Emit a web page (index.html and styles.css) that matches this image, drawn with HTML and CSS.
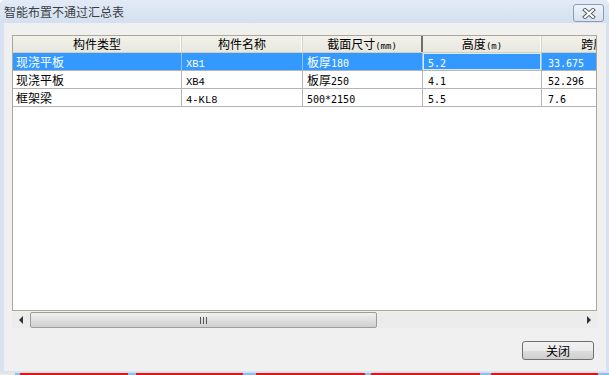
FILE: index.html
```html
<!DOCTYPE html>
<html>
<head>
<meta charset="utf-8">
<link rel="stylesheet" href="styles.css">
</head>
<body>
<div class="screen">
  <div class="window">
    <div class="titlebar">
      <span class="title">智能布置不通过汇总表</span>
      <div class="close">
        <svg width="14" height="11" viewBox="0 0 14 11">
          <path d="M3 2 L11 9 M11 2 L3 9" stroke="#5a6470" stroke-width="4" stroke-linecap="square"/>
          <path d="M3 2 L11 9 M11 2 L3 9" stroke="#ffffff" stroke-width="2" stroke-linecap="square"/>
        </svg>
      </div>
    </div>
    <div class="client">
      <div class="list">
        <div class="row header">
          <div class="cell c1">构件类型</div>
          <div class="cell c2">构件名称</div>
          <div class="cell c3 hot">截面尺寸<span class="sm">(mm)</span></div>
          <div class="cell c4">高度<span class="sm">(m)</span></div>
          <div class="cell c5">跨度<span class="sm">(m)</span></div>
        </div>
        <div class="row sel">
          <div class="cell c1">现浇平板</div>
          <div class="cell c2"><span class="ser">XB1</span></div>
          <div class="cell c3">板厚<span class="num">180</span></div>
          <div class="cell c4 focus"><span class="num">5.2</span></div>
          <div class="cell c5"><span class="num">33.675</span></div>
        </div>
        <div class="row">
          <div class="cell c1">现浇平板</div>
          <div class="cell c2"><span class="ser">XB4</span></div>
          <div class="cell c3">板厚<span class="num">250</span></div>
          <div class="cell c4"><span class="num">4.1</span></div>
          <div class="cell c5"><span class="num">52.296</span></div>
        </div>
        <div class="row">
          <div class="cell c1">框架梁</div>
          <div class="cell c2"><span class="ser">4-KL8</span></div>
          <div class="cell c3"><span class="num">500*2150</span></div>
          <div class="cell c4"><span class="num">5.5</span></div>
          <div class="cell c5"><span class="num">7.6</span></div>
        </div>
      </div>
      <div class="hscroll">
        <div class="arrow left"><span class="tri-l"></span></div>
        <div class="thumb"><span class="grip"></span></div>
        <div class="track"></div>
        <div class="arrow right"><span class="tri-r"></span></div>
      </div>
      <div class="footer">
        <div class="btn">关闭</div>
      </div>
    </div>
  </div>
  <div class="strip"></div>
</div>
</body>
</html>
```
FILE: styles.css
```css
* { box-sizing: border-box; }
html, body { margin: 0; padding: 0; }
body {
  width: 609px;
  height: 375px;
  overflow: hidden;
  font-family: "Noto Sans CJK SC", "Liberation Sans", sans-serif;
  font-size: 12px;
  color: #000;
  background: #fff;
}
.screen { width: 609px; height: 375px; display: flex; flex-direction: column; }
.window {
  width: 609px;
  height: 373px;
  background: #d7e3f1;
  display: flex;
  flex-direction: column;
  border-radius: 5px 5px 0 0;
}
.titlebar {
  height: 23px;
  display: flex;
  align-items: flex-start;
  background: linear-gradient(#e2ebf6, #d4e0ef);
  border-radius: 5px 5px 0 0;
}
.title {
  padding-left: 4px;
  line-height: 23px;
  color: #3a3f47;
  font-size: 12px;
  flex: 1;
}
.close {
  width: 31px;
  height: 18px;
  margin-top: 4px;
  margin-right: 5px;
  border: 1px solid #8d9db3;
  border-radius: 3px;
  background: linear-gradient(#eef3f9, #d9e3ef);
  display: flex;
  align-items: center;
  justify-content: center;
}
.client {
  height: 348px;
  margin: 0 3px 0 4px;
  background: #f0f0f0;
  padding: 12px 9px 0 8px;
  display: flex;
  flex-direction: column;
}
.list {
  height: 276px;
  width: 585px;
  border: 1px solid #aca899;
  background: #fff;
  overflow: hidden;
  flex: none;
}
.row {
  display: flex;
  height: 18px;
  border-bottom: 1px solid #b4b4b4;
  width: 649px;
}
.row.header {
  height: 17px;
  border-bottom: 1px solid #d2cfc0;
  background: linear-gradient(#f2f1ea, #e9e8df);
}
.cell {
  flex: none;
  height: 100%;
  border-right: 1px solid #b4b4b4;
  padding-left: 4px;
  line-height: 17px;
  white-space: nowrap;
  overflow: hidden;
}
.header .cell {
  text-align: center;
  padding-left: 0;
  line-height: 16px;
  border-right: 1px solid #d6d3c8;
  box-shadow: inset -1px 0 0 #fff;
}
.header .cell.hot {
  border-right: 2px solid #6f6f6f;
  box-shadow: none;
}
.c1 { width: 169px; padding-left: 3px; }
.c2 { width: 121px; }
.c3 { width: 120px; }
.c4 { width: 119px; padding-left: 5px; }
.c5 { width: 120px; padding-left: 6px; }
.sm { font-family: "DejaVu Sans Mono", monospace; font-size: 9px; }
.num { font-family: "DejaVu Sans Mono", monospace; font-size: 10px; }
.ser { font-family: "Liberation Mono", monospace; font-size: 10.5px; }
.row.sel { background: #3399ff; color: #fff; }
.row.sel .cell { border-right-color: #8fc3f7; }
.row.sel .cell.focus { box-shadow: inset 0 0 0 1px #dbe9f8; }
.hscroll {
  margin-top: 1px;
  height: 16px;
  width: 585px;
  display: flex;
  background: #ececec;
  flex: none;
}
.arrow {
  width: 18px;
  flex: none;
  display: flex;
  align-items: center;
  justify-content: center;
}
.arrow.right { width: 16px; }
.tri-l {
  width: 0; height: 0;
  border-top: 4px solid transparent;
  border-bottom: 4px solid transparent;
  border-right: 4px solid #333;
}
.tri-r {
  width: 0; height: 0;
  border-top: 4px solid transparent;
  border-bottom: 4px solid transparent;
  border-left: 4px solid #333;
}
.thumb {
  width: 347px;
  flex: none;
  border: 1px solid #9c9c9c;
  border-radius: 2px;
  background: linear-gradient(#f1f1f1, #e1e1e1 45%, #cfcfcf);
  display: flex;
  align-items: center;
  justify-content: center;
}
.grip {
  width: 7px;
  height: 7px;
  background: repeating-linear-gradient(90deg, #555 0 1px, transparent 1px 3px);
}
.track { flex: 1; }
.footer {
  margin-top: 13px;
  display: flex;
  justify-content: flex-end;
  padding-right: 3px;
}
.btn {
  width: 72px;
  height: 19px;
  border: 1px solid #707070;
  border-radius: 3px;
  background: linear-gradient(#f2f2f2 0%, #ebebeb 50%, #dddddd 51%, #cfcfcf 100%);
  text-align: center;
  line-height: 17px;
  font-size: 12px;
}
.strip {
  height: 2px;
  background: linear-gradient(90deg,
    #e8e8e8 0 15px, #8cc0f0 15px 20px, #e81010 20px 128px,
    #8cc0f0 128px 136px, #e81010 136px 243px, #8cc0f0 243px 256px,
    #e81010 256px 365px, #8cc0f0 365px 371px, #e81010 371px 480px,
    #8cc0f0 480px 491px, #e81010 491px 598px, #8cc0f0 598px 609px);
}
```
